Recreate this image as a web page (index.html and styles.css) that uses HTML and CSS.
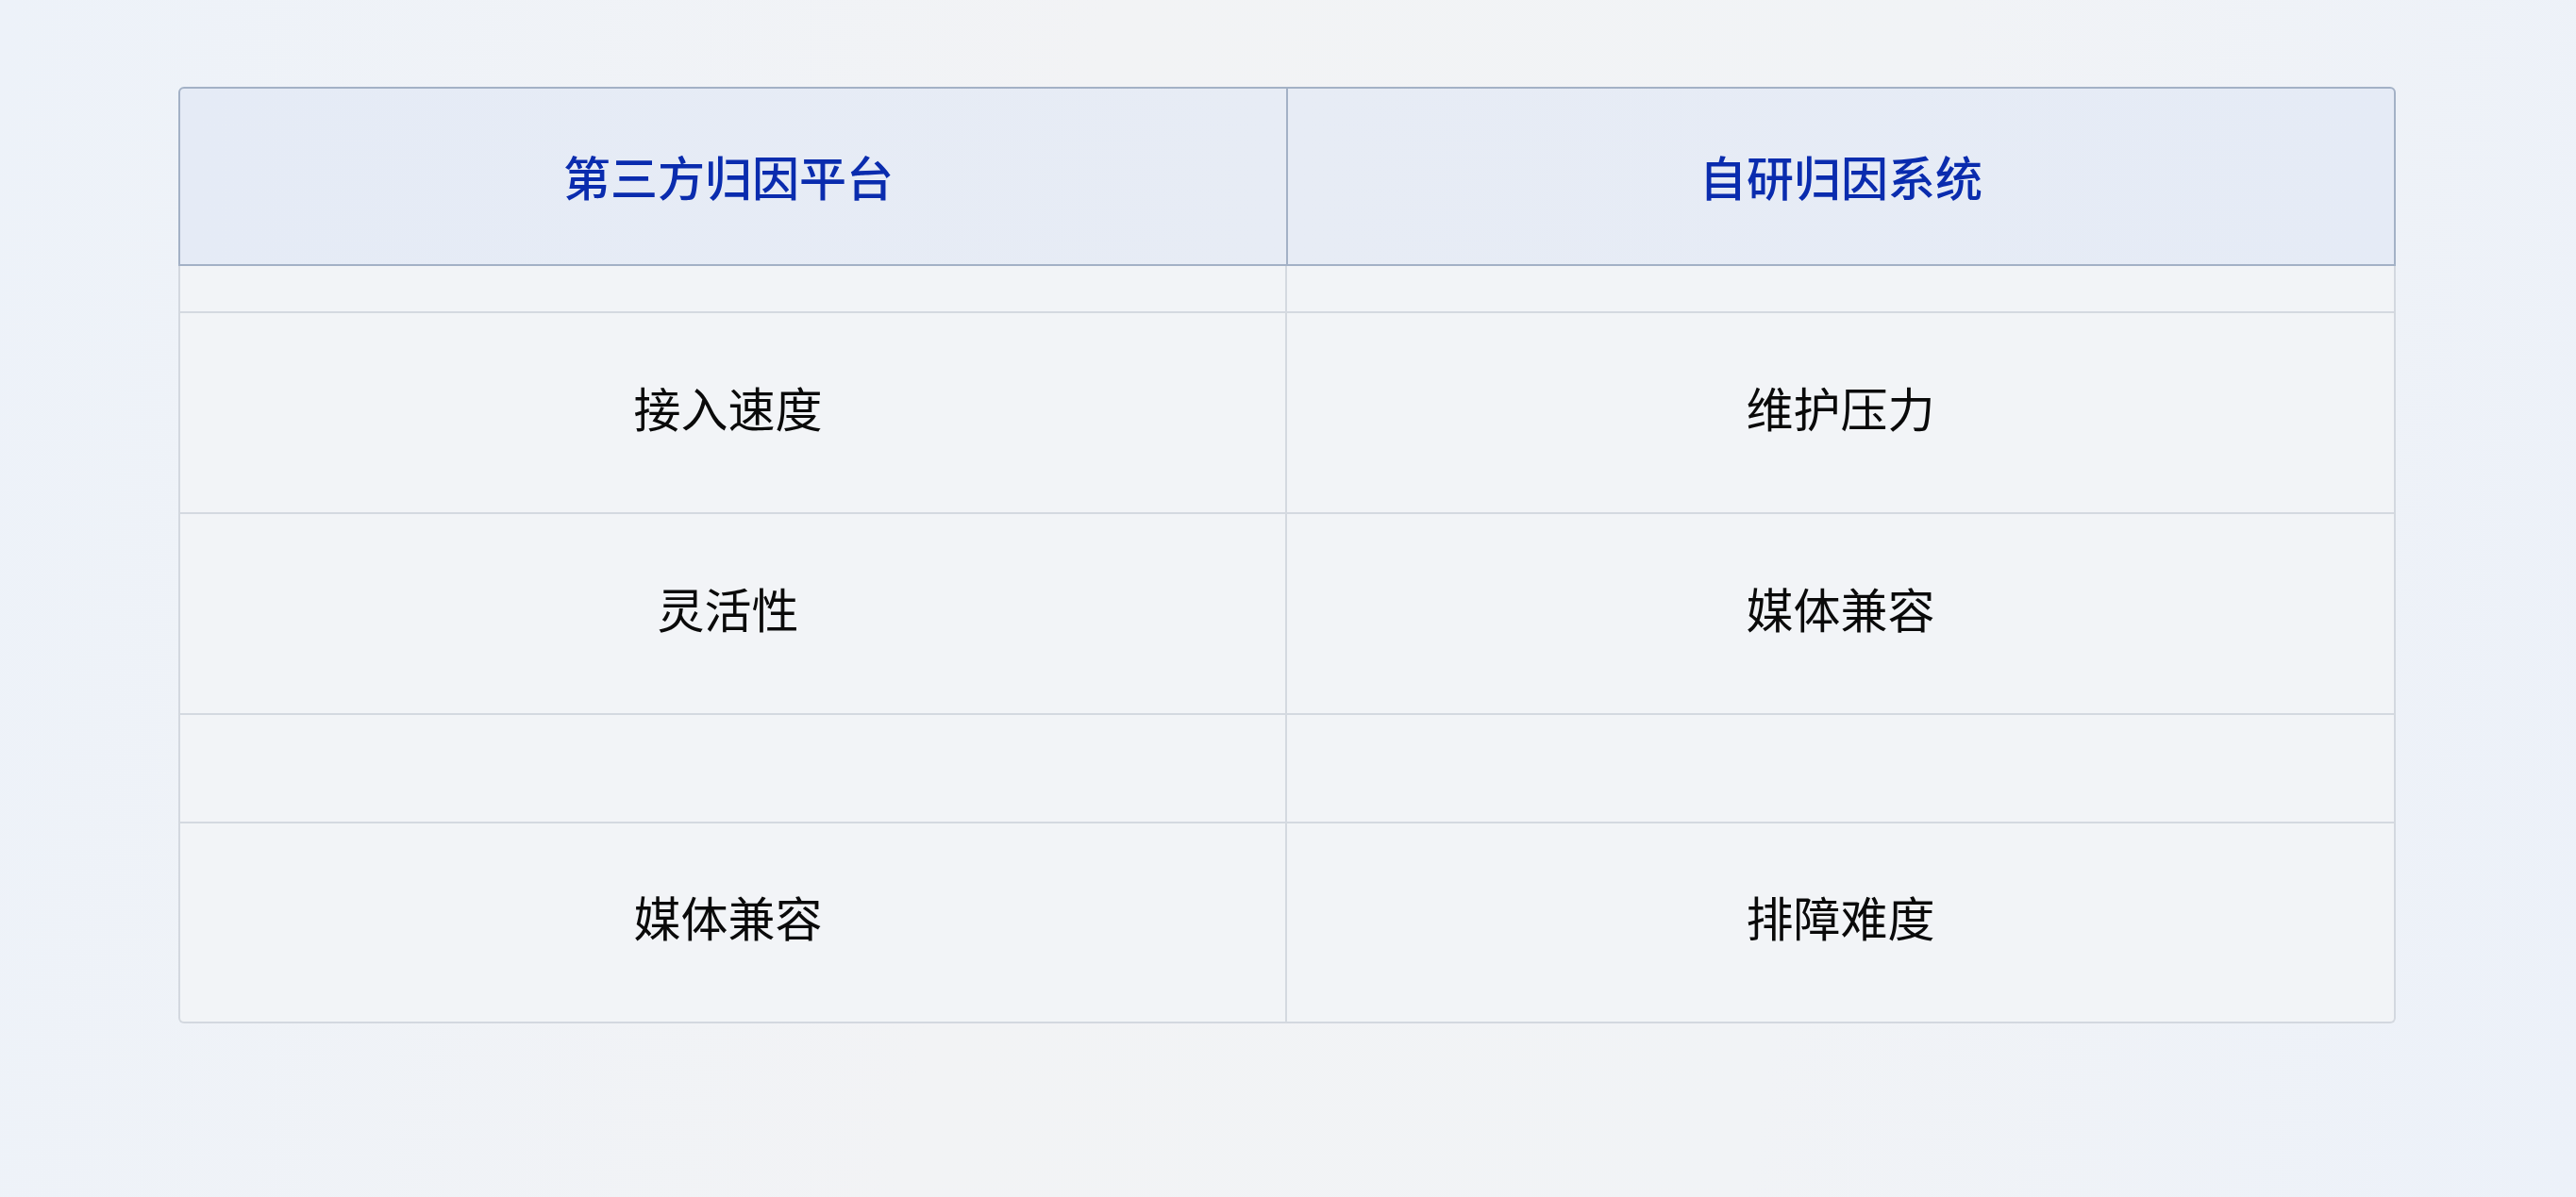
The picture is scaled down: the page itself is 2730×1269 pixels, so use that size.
FILE: index.html
```html
<!DOCTYPE html>
<html lang="zh-CN">
<head>
<meta charset="utf-8">
<title>归因对比</title>
<link rel="stylesheet" href="styles.css">
</head>
<body>
<main class="page">
  <section class="compare">
    <div class="head">
      <div class="hcell hcell-left">第三方归因平台</div>
      <div class="hcell">自研归因系统</div>
    </div>
    <div class="body">
      <div class="row row-thin"><div class="cell cell-left"></div><div class="cell"></div></div>
      <div class="row row-tall"><div class="cell cell-left">接入速度</div><div class="cell">维护压力</div></div>
      <div class="row row-tall"><div class="cell cell-left">灵活性</div><div class="cell">媒体兼容</div></div>
      <div class="row row-mid"><div class="cell cell-left"></div><div class="cell"></div></div>
      <div class="row row-tall row-last"><div class="cell cell-left">媒体兼容</div><div class="cell">排障难度</div></div>
    </div>
  </section>
</main>
</body>
</html>
```

FILE: styles.css
```css
html, body {
  margin: 0;
  padding: 0;
}
body {
  width: 2730px;
  height: 1269px;
  background: linear-gradient(100deg, #edf2f9 0%, #f2f3f5 40%, #f1f3f6 70%, #ecf1f9 100%);
  font-family: "Noto Sans CJK SC", "Noto Sans", sans-serif;
  overflow: hidden;
}
.page {
  padding: 92px 191px 0 189px;
}
.compare {
  display: flex;
  flex-direction: column;
}
.head {
  display: grid;
  grid-template-columns: 1174px 1fr;
  height: 190px;
  box-sizing: border-box;
  border: 2px solid #a3b1c6;
  border-radius: 6px 6px 0 0;
  background: linear-gradient(90deg, #e5ebf6 0%, #e7ecf5 50%, #e5ebf6 100%);
}
.hcell {
  display: flex;
  align-items: center;
  justify-content: center;
  font-size: 50px;
  font-weight: 500;
  color: #0a2cae;
  padding-bottom: 2px;
}
.hcell-left {
  border-right: 2px solid #a3b1c6;
  padding-right: 10px;
}
.body {
  border: 2px solid #d3d8df;
  border-top: none;
  border-radius: 0 0 6px 6px;
  background: #f2f4f7;
}
.row {
  display: grid;
  grid-template-columns: 1173px 1fr;
  border-bottom: 2px solid #d4d9e0;
  box-sizing: border-box;
}
.row-thin { height: 50px; }
.row-tall { height: 213px; }
.row-mid { height: 115px; }
.row-last { border-bottom: none; height: 210px; }
.cell {
  display: flex;
  align-items: center;
  justify-content: center;
  font-size: 50px;
  color: #0a0a0a;
  padding-bottom: 14px;
}
.cell-left {
  border-right: 2px solid #d4d9e0;
  padding-right: 10px;
}
```
